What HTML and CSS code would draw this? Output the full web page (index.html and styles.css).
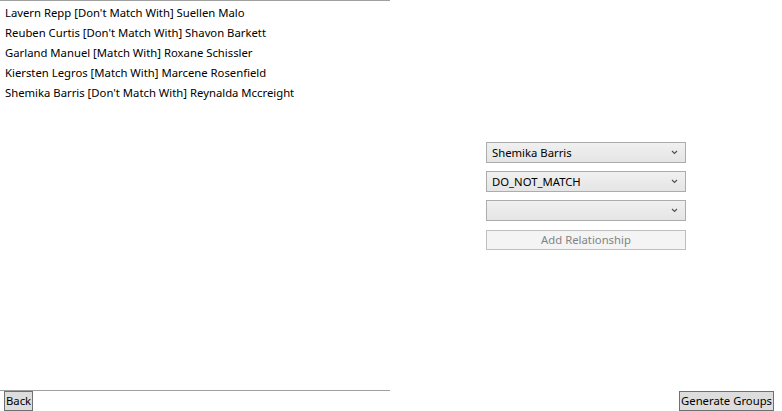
FILE: index.html
```html
<!DOCTYPE html>
<html>
<head>
<meta charset="utf-8">
<link rel="stylesheet" href="styles.css">
</head>
<body>
<div class="window">
  <div class="main">
    <div class="list">
      <div class="row">Lavern Repp [Don't Match With] Suellen Malo</div>
      <div class="row">Reuben Curtis [Don't Match With] Shavon Barkett</div>
      <div class="row">Garland Manuel [Match With] Roxane Schissler</div>
      <div class="row">Kiersten Legros [Match With] Marcene Rosenfield</div>
      <div class="row">Shemika Barris [Don't Match With] Reynalda Mccreight</div>
    </div>
    <div class="editor">
      <div class="form">
        <div class="combo"><span>Shemika Barris</span><svg class="chev" width="7" height="5" viewBox="0 0 7 5"><path d="M1 1 L3.5 3.5 L6 1" fill="none" stroke="#505050" stroke-width="1.1"/></svg></div>
        <div class="combo"><span>DO_NOT_MATCH</span><svg class="chev" width="7" height="5" viewBox="0 0 7 5"><path d="M1 1 L3.5 3.5 L6 1" fill="none" stroke="#505050" stroke-width="1.1"/></svg></div>
        <div class="combo"><span></span><svg class="chev" width="7" height="5" viewBox="0 0 7 5"><path d="M1 1 L3.5 3.5 L6 1" fill="none" stroke="#505050" stroke-width="1.1"/></svg></div>
        <div class="btn-disabled">Add Relationship</div>
      </div>
    </div>
  </div>
  <div class="bottom">
    <div class="btn">Back</div>
    <div class="btn">Generate Groups</div>
  </div>
</div>
</body>
</html>
```
FILE: styles.css
```css
html, body {
  margin: 0;
  padding: 0;
  background: #ffffff;
}
.window {
  width: 782px;
  height: 411px;
  display: flex;
  flex-direction: column;
  font-family: "Noto Sans", "Open Sans", sans-serif;
  font-size: 11.3px;
  color: #000000;
}
.main {
  display: grid;
  grid-template-columns: 390px 1fr;
  height: 391px;
}
.list {
  border-top: 1px solid #a0a0a0;
  border-bottom: 1px solid #a0a0a0;
  box-sizing: border-box;
  height: 391px;
  padding: 2px 0 0 5px;
}
.row {
  height: 20px;
  line-height: 20px;
  white-space: nowrap;
}
.editor {
  display: flex;
  align-items: flex-start;
  justify-content: center;
  padding-top: 142px;
}
.form {
  width: 200px;
  display: flex;
  flex-direction: column;
  gap: 8px;
}
.combo {
  height: 21px;
  box-sizing: border-box;
  border: 1px solid #acacac;
  background: linear-gradient(#f0f0f0, #e5e5e5);
  display: flex;
  align-items: center;
  justify-content: space-between;
  padding: 0 7px 0 5px;
  line-height: 19px;
}
.chev {
  display: block;
}
.btn-disabled {
  margin-top: 1px;
  height: 20px;
  box-sizing: border-box;
  border: 1px solid #bfbfbf;
  background: #f4f4f4;
  color: #838383;
  text-align: center;
  line-height: 18px;
}
.bottom {
  display: flex;
  justify-content: space-between;
  align-items: flex-start;
  padding: 0 8px 0 4px;
  height: 20px;
}
.btn {
  height: 20px;
  box-sizing: border-box;
  border: 1px solid #707070;
  background: #dddddd;
  padding: 0 1px;
  line-height: 18px;
}
```
